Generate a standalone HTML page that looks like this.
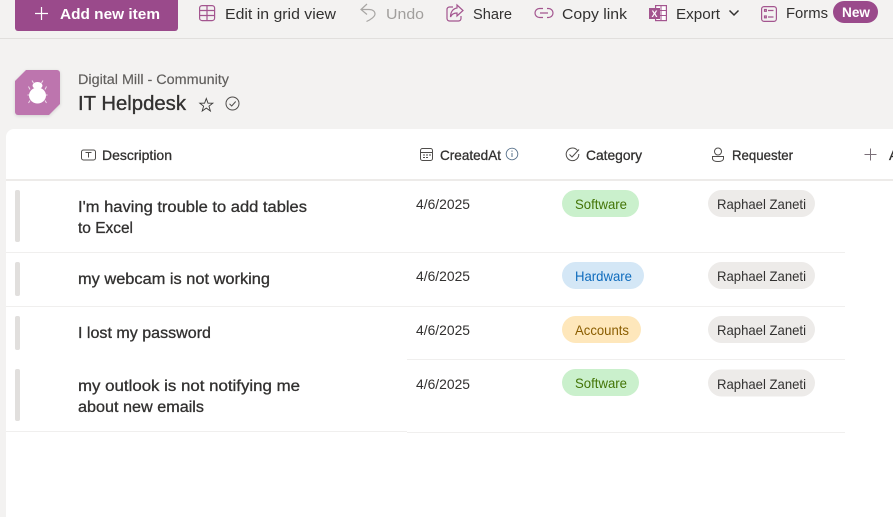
<!DOCTYPE html>
<html lang="en"><head><meta charset="utf-8"><title>IT Helpdesk</title>
<style>
html,body{margin:0;padding:0;width:893px;height:517px;overflow:hidden;background:#f3f2f1}
svg{display:block;position:absolute;left:0;top:0}
text{font-family:"Liberation Sans",sans-serif;white-space:pre}
.s{stroke-width:.3px}
.i{fill:none;stroke:#a3558f;stroke-width:1.2}
.g{fill:none;stroke:#4f4d4b;stroke-width:1}
</style></head><body>
<svg width="893" height="517" viewBox="0 0 893 517" xmlns="http://www.w3.org/2000/svg">
<defs><filter id="sh" x="-20%" y="-20%" width="140%" height="140%"><feDropShadow dx="0" dy="1" stdDeviation="1.500" flood-color="#000" flood-opacity=".14"/></filter></defs>
<rect width="893" height="517" fill="#f3f2f1"/>
<rect x="0" y="38" width="893" height="1" fill="#e1dfdd"/>
<!-- toolbar -->
<path d="M15 -4H178V28a3 3 0 0 1-3 3H18a3 3 0 0 1-3-3Z" fill="#9a4a8b"/>
<path d="M41.500 7V20M35 13.500H48" stroke="#fff" stroke-width="1.200" fill="none"/>
<text x="60" y="19" font-size="14.500" font-weight="700" fill="#fff" textLength="100" lengthAdjust="spacingAndGlyphs">Add new item</text>
<g class="i"><rect x="199.600" y="5.600" width="15" height="15" rx="2.500"/><path d="M199.600 10.500H214.600M199.600 15.500H214.600M207 5.600V20.600"/></g>
<text x="225" y="19" font-size="15" fill="#323130" textLength="111" lengthAdjust="spacingAndGlyphs">Edit in grid view</text>
<path d="M367 4L361 9.500L367 14.500M361.500 9.500H369C373 9.500 375 11.500 375 14C375 16.500 371 19.500 366.500 21.500" fill="none" stroke="#a8a6a4" stroke-width="1.200"/>
<text x="386" y="19" font-size="15" fill="#a19f9d" textLength="38" lengthAdjust="spacingAndGlyphs">Undo</text>
<g class="i"><path d="M453 7H449.500A2.500 2.500 0 0 0 447 9.500V18.500A2.500 2.500 0 0 0 449.500 21H458.500A2.500 2.500 0 0 0 461 18.500V16"/><path d="M457 5L463 10.500L457 16V13C453.500 13 451.500 14.500 450.500 17C450.500 12 453 8.500 457 8Z"/></g>
<text x="473" y="19" font-size="15" fill="#323130" textLength="39" lengthAdjust="spacingAndGlyphs">Share</text>
<g class="i"><path d="M543 8.500H539.500A4.500 4.500 0 0 0 539.500 17.500H543M547 8.500H548.500A4.500 4.500 0 0 1 548.500 17.500H547M540 13H548"/></g>
<text x="562" y="19" font-size="15" fill="#323130" textLength="65" lengthAdjust="spacingAndGlyphs">Copy link</text>
<g><rect x="655.600" y="5.600" width="10.800" height="15" fill="#fff" stroke="#a3558f" stroke-width="1.200"/><path d="M656 10.500H666M656 15.500H666M661 6V20" stroke="#a3558f" stroke-width="1"/><rect x="649" y="8" width="11" height="11" fill="#a3558f"/></g>
<text x="651.500" y="17" font-size="9" font-weight="700" fill="#fff">X</text>
<text x="676" y="19" font-size="15" fill="#323130" textLength="44" lengthAdjust="spacingAndGlyphs">Export</text>
<path d="M729.500 10.500L734 15L738.500 10.500" fill="none" stroke="#323130" stroke-width="1.500"/>
<g class="i"><rect x="761.600" y="6.600" width="14.800" height="14.800" rx="2.500"/><path d="M768 10.500H773.500M768 17H773.500"/><rect x="764.500" y="9.500" width="1.800" height="1.800"/><rect x="764.500" y="16" width="1.800" height="1.800"/></g>
<text x="786" y="18" font-size="15" fill="#323130" textLength="42" lengthAdjust="spacingAndGlyphs">Forms</text>
<rect x="833" y="1" width="45" height="22" rx="11" fill="#9a4a8b"/>
<text x="842" y="17" font-size="13.500" font-weight="700" fill="#fff" textLength="28" lengthAdjust="spacingAndGlyphs">New</text>
<!-- title -->
<path d="M26 70H57a3 3 0 0 1 3 3V104L49 115H18a3 3 0 0 1-3-3V81Z" fill="#bd75ae" filter="url(#sh)"/>
<g fill="#fff"><ellipse cx="37.500" cy="95.500" rx="8.500" ry="8"/><ellipse cx="37.500" cy="85.500" rx="5" ry="3.500"/></g>
<path d="M33.500 83L32 80.500M41.500 83L43 80.500M30 89.500L28.500 86.500M45 89.500L46.500 86.500M29 95H27.500M46 95H47.500M30 100.500L28.500 103M45 100.500L46.500 103" stroke="#fff" stroke-width="1" stroke-opacity=".75" fill="none"/>
<text x="78" y="84" font-size="13.500" fill="#605e5c" stroke="#605e5c" style="stroke-width:.15px" textLength="151" lengthAdjust="spacingAndGlyphs">Digital Mill - Community</text>
<text x="78" y="110" font-size="20.500" fill="#323130" stroke="#323130" style="stroke-width:.35px" textLength="108" lengthAdjust="spacingAndGlyphs">IT Helpdesk</text>
<path d="M206.300 98.500L208 103.200H212.800L209 106.200L210.400 111L206.300 108.100L202.200 111L203.600 106.200L199.800 103.200H204.600Z" fill="none" stroke="#3b3a39" stroke-width=".9"/>
<circle cx="232.500" cy="103.500" r="6.500" class="g"/>
<path d="M229.500 103.800L231.700 106L235.700 101.500" class="g"/>
<!-- card -->
<path d="M6 517V137a8 8 0 0 1 8-8H893V517Z" fill="#fff"/>
<rect x="6" y="179" width="887" height="2" fill="#edebe9"/>
<rect x="6" y="252" width="839" height="1" fill="#f0efee"/>
<rect x="6" y="306" width="839" height="1" fill="#f0efee"/>
<rect x="407" y="359" width="438" height="1" fill="#f0efee"/>
<rect x="6" y="431" width="401" height="1" fill="#f0efee"/>
<rect x="407" y="432" width="438" height="1" fill="#f0efee"/>
<!-- header -->
<g class="g"><rect x="81.500" y="150" width="14" height="10" rx="2"/><path d="M85.500 152.500H91.500M88.500 152.500V157.500"/></g>
<text x="102" y="160" font-size="14" fill="#323130" stroke="#323130" class="s" textLength="70" lengthAdjust="spacingAndGlyphs">Description</text>
<g class="g"><rect x="420.500" y="148.500" width="12" height="12" rx="2"/><path d="M420.500 152.500H432.500M423 155H425M426 155H428M429 155H431M423 157.500H425M426 157.500H428"/></g>
<text x="440" y="160" font-size="14" fill="#323130" stroke="#323130" class="s" textLength="61" lengthAdjust="spacingAndGlyphs">CreatedAt</text>
<circle cx="512" cy="154" r="5.800" fill="none" stroke="#56708a" stroke-width=".9"/><path d="M512 153V157M512 150.500V151.700" stroke="#56708a" stroke-width="1" fill="none"/>
<path d="M577.500 150.500A6.300 6.300 0 1 0 578.800 154" class="g"/><path d="M569.500 154.500L572 157L579 149.500" class="g"/>
<text x="586" y="160" font-size="14" fill="#323130" stroke="#323130" class="s" textLength="56" lengthAdjust="spacingAndGlyphs">Category</text>
<g class="g"><circle cx="718" cy="151.500" r="3.500"/><path d="M712.500 156.500H723.500V158.500C723.500 160.500 721 161.500 718 161.500C715 161.500 712.500 160.500 712.500 158.500Z"/></g>
<text x="732" y="160" font-size="14" fill="#323130" stroke="#323130" class="s" textLength="61" lengthAdjust="spacingAndGlyphs">Requester</text>
<path d="M870.500 148.500V160.500M864.500 154.500H876.500" stroke="#7a6f78" stroke-width="1" fill="none"/>
<text x="889" y="160" font-size="14" fill="#323130" stroke="#323130" class="s">Add column</text>
<!-- handles -->
<g fill="#e1dfdd"><rect x="15" y="190" width="5" height="52" rx="2"/><rect x="15" y="262" width="5" height="34" rx="2"/><rect x="15" y="316" width="5" height="34" rx="2"/><rect x="15" y="369" width="5" height="52" rx="2"/></g>
<!-- descriptions -->
<g font-size="15.500" fill="#323130" stroke="#323130" class="s">
<text x="78" y="212" textLength="229" lengthAdjust="spacingAndGlyphs">I'm having trouble to add tables</text>
<text x="78" y="233" textLength="55" lengthAdjust="spacingAndGlyphs">to Excel</text>
<text x="78" y="284" textLength="192" lengthAdjust="spacingAndGlyphs">my webcam is not working</text>
<text x="78" y="338" textLength="133" lengthAdjust="spacingAndGlyphs">I lost my password</text>
<text x="78" y="391" textLength="222" lengthAdjust="spacingAndGlyphs">my outlook is not notifying me</text>
<text x="78" y="412" textLength="126" lengthAdjust="spacingAndGlyphs">about new emails</text>
</g>
<!-- dates -->
<g font-size="14" fill="#323130">
<text x="416" y="209" textLength="54" lengthAdjust="spacingAndGlyphs">4/6/2025</text>
<text x="416" y="281" textLength="54" lengthAdjust="spacingAndGlyphs">4/6/2025</text>
<text x="416" y="335" textLength="54" lengthAdjust="spacingAndGlyphs">4/6/2025</text>
<text x="416" y="389" textLength="54" lengthAdjust="spacingAndGlyphs">4/6/2025</text>
</g>
<!-- category pills -->
<rect x="562" y="190" width="77" height="27" rx="13.500" fill="#caf0cc"/>
<text x="575" y="209" font-size="14" fill="#437406" textLength="52" lengthAdjust="spacingAndGlyphs">Software</text>
<rect x="562" y="262" width="82" height="27" rx="13.500" fill="#d4e7f6"/>
<text x="575" y="281" font-size="14" fill="#0f6cbd" textLength="57" lengthAdjust="spacingAndGlyphs">Hardware</text>
<rect x="562" y="316" width="79" height="27" rx="13.500" fill="#fee7bb"/>
<text x="575" y="335" font-size="14" fill="#8a5d00" textLength="54" lengthAdjust="spacingAndGlyphs">Accounts</text>
<rect x="562" y="369" width="77" height="27" rx="13.500" fill="#caf0cc"/>
<text x="575" y="388" font-size="14" fill="#437406" textLength="52" lengthAdjust="spacingAndGlyphs">Software</text>
<!-- requester pills -->
<g fill="#edebe9"><rect x="708" y="190" width="107" height="27" rx="13.500"/><rect x="708" y="262" width="107" height="27" rx="13.500"/><rect x="708" y="316" width="107" height="27" rx="13.500"/><rect x="708" y="369.500" width="107" height="27" rx="13.500"/></g>
<g font-size="14" fill="#323130">
<text x="717" y="209" textLength="89" lengthAdjust="spacingAndGlyphs">Raphael Zaneti</text>
<text x="717" y="281" textLength="89" lengthAdjust="spacingAndGlyphs">Raphael Zaneti</text>
<text x="717" y="335" textLength="89" lengthAdjust="spacingAndGlyphs">Raphael Zaneti</text>
<text x="717" y="389" textLength="89" lengthAdjust="spacingAndGlyphs">Raphael Zaneti</text>
</g>
</svg>
</body></html>
